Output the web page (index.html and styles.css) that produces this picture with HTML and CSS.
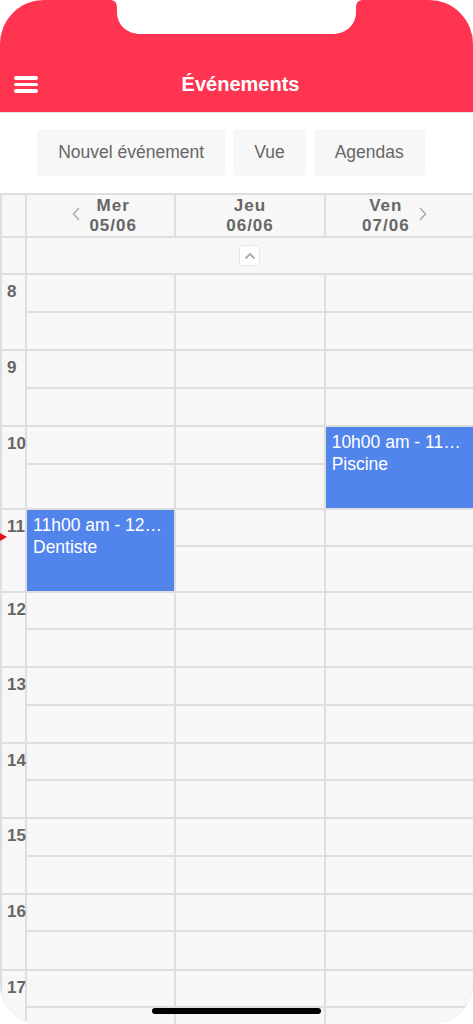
FILE: index.html
```html
<!DOCTYPE html>
<html lang="fr">
<head>
    <meta charset="UTF-8">
    <meta name="viewport" content="width=device-width, initial-scale=1.0">
    <title>Événements</title>
    <link rel="stylesheet" href="styles.css">
</head>
<body>
    <div class="phone">
        <header class="app-bar">
            <svg class="notch" viewBox="0 0 473 36" width="473" height="36">
                <path d="M110 0 C114 0 117 2 117 8 L117 12 C117 25 127 34 141 34 L332 34 C346 34 356 25 356 12 L356 8 C356 2 359 0 363 0 Z" fill="#fff"/>
            </svg>
            <div class="app-bar-row">
                <button class="menu-button"><span></span><span></span><span></span></button>
                <h1 class="app-title">Événements</h1>
                <div></div>
            </div>
        </header>

        <div class="toolbar">
            <button class="tool-button">Nouvel événement</button>
            <button class="tool-button">Vue</button>
            <button class="tool-button">Agendas</button>
        </div>

        <div class="calendar">
            <!-- day headers -->
            <div class="corner"></div>
            <div class="day-head first">
                <svg class="chevron" viewBox="0 0 8 14" width="8" height="14"><path d="M7 1 L1.5 7 L7 13" fill="none" stroke="#b0b0b0" stroke-width="1.6"/></svg>
                <div class="day-label">Mer<br>05/06</div>
            </div>
            <div class="day-head">
                <div class="day-label">Jeu<br>06/06</div>
            </div>
            <div class="day-head last">
                <div class="day-label">Ven<br>07/06</div>
                <svg class="chevron" viewBox="0 0 8 14" width="8" height="14"><path d="M1 1 L6.5 7 L1 13" fill="none" stroke="#b0b0b0" stroke-width="1.6"/></svg>
            </div>

            <!-- all day -->
            <div class="corner"></div>
            <div class="allday">
                <button class="collapse-button">
                    <svg viewBox="0 0 12 8" width="12" height="8"><path d="M1.5 6.5 L6 2 L10.5 6.5" fill="none" stroke="#aaa" stroke-width="1.8"/></svg>
                </button>
            </div>

            <!-- 8 -->
            <div class="hour">8</div>
            <div class="slot"></div><div class="slot"></div><div class="slot"></div>
            <div class="slot"></div><div class="slot"></div><div class="slot"></div>
            <!-- 9 -->
            <div class="hour">9</div>
            <div class="slot"></div><div class="slot"></div><div class="slot"></div>
            <div class="slot"></div><div class="slot"></div><div class="slot"></div>
            <!-- 10 -->
            <div class="hour">10</div>
            <div class="slot"></div><div class="slot"></div>
            <div class="event">
                <div class="event-time">10h00 am - 11…</div>
                <div class="event-title">Piscine</div>
            </div>
            <div class="slot"></div><div class="slot"></div>
            <!-- 11 -->
            <div class="hour">11<span class="now-marker"></span></div>
            <div class="event">
                <div class="event-time">11h00 am - 12…</div>
                <div class="event-title">Dentiste</div>
            </div>
            <div class="slot"></div><div class="slot"></div>
            <div class="slot"></div><div class="slot"></div>
            <!-- 12 -->
            <div class="hour">12</div>
            <div class="slot"></div><div class="slot"></div><div class="slot"></div>
            <div class="slot"></div><div class="slot"></div><div class="slot"></div>
            <!-- 13 -->
            <div class="hour">13</div>
            <div class="slot"></div><div class="slot"></div><div class="slot"></div>
            <div class="slot"></div><div class="slot"></div><div class="slot"></div>
            <!-- 14 -->
            <div class="hour">14</div>
            <div class="slot"></div><div class="slot"></div><div class="slot"></div>
            <div class="slot"></div><div class="slot"></div><div class="slot"></div>
            <!-- 15 -->
            <div class="hour">15</div>
            <div class="slot"></div><div class="slot"></div><div class="slot"></div>
            <div class="slot"></div><div class="slot"></div><div class="slot"></div>
            <!-- 16 -->
            <div class="hour">16</div>
            <div class="slot"></div><div class="slot"></div><div class="slot"></div>
            <div class="slot"></div><div class="slot"></div><div class="slot"></div>
            <!-- 17 -->
            <div class="hour">17</div>
            <div class="slot"></div><div class="slot"></div><div class="slot"></div>
            <div class="slot"></div><div class="slot"></div><div class="slot"></div>
        </div>

        <div class="home-bar"></div>
    </div>
</body>
</html>
```

FILE: styles.css
```css
body {
    margin: 0;
    background: #fff;
    font-family: 'Liberation Sans', Arial, sans-serif;
}
.phone {
    position: relative;
    width: 473px;
    height: 1024px;
    overflow: hidden;
    border-radius: 44px 44px 40px 40px;
    background: #f7f7f7;
}

/* top bar */
.app-bar {
    position: relative;
    height: 112px;
    padding-top: 59px;
    box-sizing: border-box;
    background: #fe3450;
    box-shadow: 0 1px 0 #e2e2e2;
}
.notch {
    position: absolute;
    top: 0;
    left: 0;
    display: block;
}
.app-bar-row {
    display: grid;
    grid-template-columns: 1fr auto 1fr;
    align-items: center;
    height: 49px;
    padding-left: 8px;
}
.menu-button {
    justify-self: start;
    display: flex;
    flex-direction: column;
    gap: 3.3px;
    margin: 2px 0 0 6px;
    padding: 0;
    border: none;
    background: none;
}
.menu-button span {
    display: block;
    width: 24px;
    height: 3.2px;
    border-radius: 2px;
    background: #fff;
}
.app-title {
    margin: 0;
    color: #fff;
    font-size: 20px;
    font-weight: bold;
    line-height: 24px;
}

/* toolbar */
.toolbar {
    display: flex;
    justify-content: center;
    gap: 8px;
    padding: 17px 11px 17px 0;
    background: #fff;
}
.tool-button {
    height: 47px;
    padding: 0 21px;
    border: none;
    border-radius: 4px;
    background: #f7f7f7;
    color: #666;
    font-family: 'Liberation Sans', Arial, sans-serif;
    font-size: 17.5px;
}

/* calendar grid */
.calendar {
    display: grid;
    grid-template-columns: 23px repeat(3, 1fr);
    grid-template-rows: 41px 35px 36px 36px 36px 36px 36px 43px 35px 44px 35px 36px 36px 36px 35px 36px 36px 36px 35px 37px 35px 40px;
    gap: 2px;
    padding: 2px 0 0 2px;
    background: #dedede;
}
.corner,
.slot,
.allday,
.day-head,
.hour {
    background: #f7f7f7;
}
.day-head {
    display: flex;
    justify-content: center;
    align-items: center;
    gap: 9px;
    color: #666;
    font-size: 17px;
    font-weight: bold;
    letter-spacing: 1px;
    line-height: 20px;
    text-align: center;
}
.day-head.first {
    padding-left: 8px;
}
.day-head.last {
    padding-right: 10px;
}
.chevron {
    display: block;
    margin-top: -4px;
}
.allday {
    grid-column: span 3;
    display: flex;
    justify-content: center;
    align-items: center;
}
.collapse-button {
    display: flex;
    justify-content: center;
    align-items: center;
    width: 21px;
    height: 21px;
    padding: 0;
    border: 1px solid #e6e6e6;
    border-radius: 3px;
    background: #fff;
}
.hour {
    position: relative;
    grid-row: span 2;
    padding: 7px 0 0 5px;
    color: #666;
    font-size: 17px;
    font-weight: bold;
    line-height: 20px;
    white-space: nowrap;
}
.now-marker {
    position: absolute;
    left: -2px;
    top: 23px;
    width: 0;
    height: 0;
    border-top: 4.5px solid transparent;
    border-bottom: 4.5px solid transparent;
    border-left: 7px solid #e8101e;
}
.event {
    grid-row: span 2;
    min-width: 0;
    padding: 5px 6px;
    background: #5285ec;
    color: #fff;
    font-size: 17.5px;
    line-height: 21.5px;
}
.event-time {
    white-space: nowrap;
}

.home-bar {
    position: absolute;
    left: 152px;
    bottom: 10px;
    width: 169px;
    height: 6px;
    border-radius: 3px;
    background: #000;
}
```
